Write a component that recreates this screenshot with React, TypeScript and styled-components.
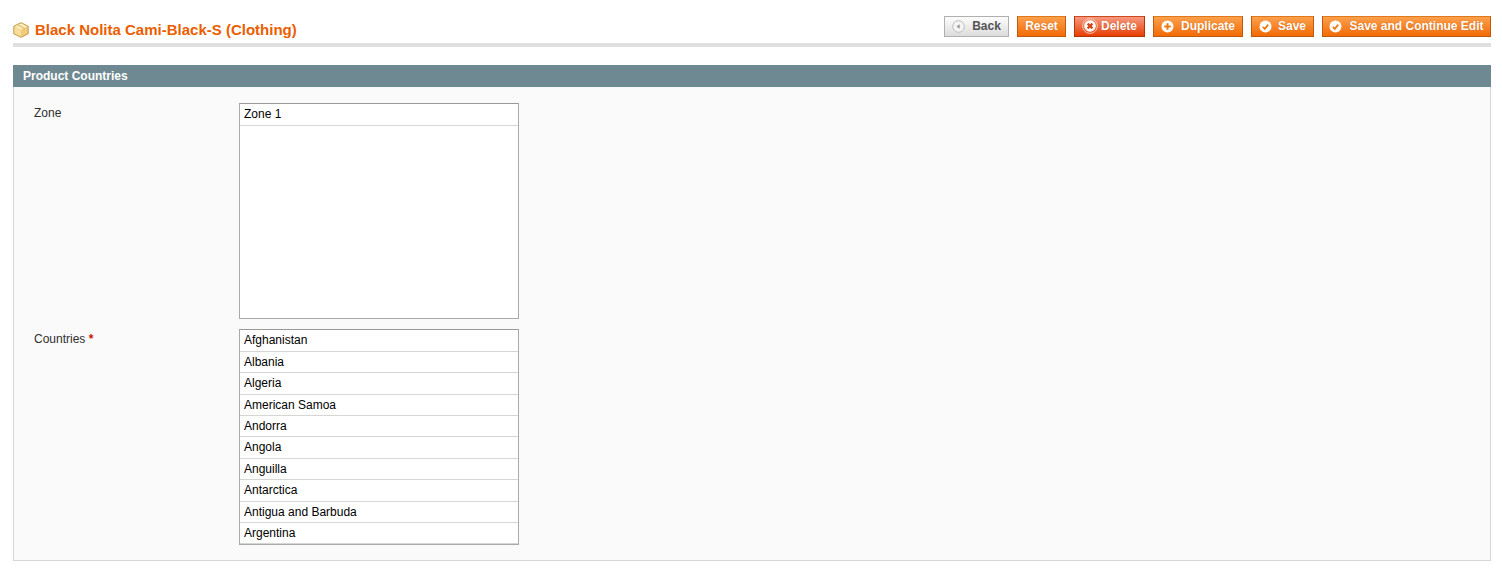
import React from "react";
import styled, { createGlobalStyle } from "styled-components";

type Tone = "plain" | "orange" | "red";
type Glyph = "back" | "delete" | "add" | "save";

const GlobalStyle = createGlobalStyle`
  html, body {
    margin: 0;
    padding: 0;
    background: #fff;
  }
  body {
    font-family: "Liberation Sans", Arial, sans-serif;
    font-size: 12px;
    color: #2f2f2f;
  }
`;

const countries = [
  "Afghanistan",
  "Albania",
  "Algeria",
  "American Samoa",
  "Andorra",
  "Angola",
  "Anguilla",
  "Antarctica",
  "Antigua and Barbuda",
  "Argentina",
];

const BoxIcon = () => (
  <svg width="16" height="16" viewBox="0 0 16 16">
    <path d="M8 .7 15.2 4.2v7.6L8 15.3.8 11.8V4.2z" fill="#efcb7c" stroke="#c29a4e" strokeWidth="1" />
    <path d="M8 1.4 14.4 4.5 8 7.6 1.6 4.5z" fill="#fbeec4" />
    <path d="M8 7.8v6.6L1.6 11.4V5z" fill="#f7dc9a" />
    <path d="M4.6 2.9 11.2 6.1v2.6" fill="none" stroke="#e8c272" strokeWidth="1.2" />
  </svg>
);

const ButtonIcon = ({ glyph }: { glyph: Glyph }) => {
  if (glyph === "back") {
    return (
      <svg width="13" height="13" viewBox="0 0 13 13">
        <circle cx="6.5" cy="6.5" r="5.8" fill="#f4f4f4" stroke="#bdbdbd" />
        <path d="M7.6 4.2v4.6L4.7 6.5z" fill="#8f8f8f" />
      </svg>
    );
  }
  if (glyph === "delete") {
    return (
      <svg width="16" height="16" viewBox="0 0 16 16">
        <circle cx="8" cy="8" r="7.4" fill="none" stroke="#f9c6b2" strokeWidth="1" />
        <circle cx="8" cy="8" r="5.8" fill="#fff" />
        <path d="M5.6 5.6l4.8 4.8M10.4 5.6l-4.8 4.8" stroke="#d9431a" strokeWidth="2.2" />
      </svg>
    );
  }
  if (glyph === "add") {
    return (
      <svg width="13" height="13" viewBox="0 0 13 13">
        <circle cx="6.5" cy="6.5" r="6" fill="#fff" />
        <path d="M6.5 3.2v6.6M3.2 6.5h6.6" stroke="#f07a12" strokeWidth="2" />
      </svg>
    );
  }
  return (
    <svg width="13" height="13" viewBox="0 0 13 13">
      <circle cx="6.5" cy="6.5" r="6" fill="#fff" />
      <path d="M3.8 6.8l2 2 3.4-4.2" fill="none" stroke="#f07a12" strokeWidth="1.8" />
    </svg>
  );
};

export default function App() {
  return (
    <Page>
      <GlobalStyle />
      <ContentHeader>
        <Heading>
          <BoxIcon />
          <span>Black Nolita Cami-Black-S (Clothing)</span>
        </Heading>
        <Actions>
          <ActionButton tone="plain" $width={65}>
            <ButtonIcon glyph="back" />
            <ButtonLabel $gap={7}>Back</ButtonLabel>
          </ActionButton>
          <ActionButton tone="orange" $width={49}>
            <ButtonLabel $gap={0}>Reset</ButtonLabel>
          </ActionButton>
          <ActionButton tone="red" $width={71}>
            <ButtonIcon glyph="delete" />
            <ButtonLabel $gap={3}>Delete</ButtonLabel>
          </ActionButton>
          <ActionButton tone="orange" $width={90}>
            <ButtonIcon glyph="add" />
            <ButtonLabel $gap={7}>Duplicate</ButtonLabel>
          </ActionButton>
          <ActionButton tone="orange" $width={63}>
            <ButtonIcon glyph="save" />
            <ButtonLabel $gap={6}>Save</ButtonLabel>
          </ActionButton>
          <ActionButton tone="orange" $width={169}>
            <ButtonIcon glyph="save" />
            <ButtonLabel $gap={7}>Save and Continue Edit</ButtonLabel>
          </ActionButton>
        </Actions>
      </ContentHeader>

      <PanelHead>Product Countries</PanelHead>
      <Fieldset>
        <FormRow>
          <FieldLabel>Zone</FieldLabel>
          <ListBox>
            <ListItem>Zone 1</ListItem>
          </ListBox>
        </FormRow>
        <FormRow>
          <FieldLabel>
            Countries <Required>*</Required>
          </FieldLabel>
          <ListBox>
            {countries.map((name) => (
              <ListItem key={name}>{name}</ListItem>
            ))}
          </ListBox>
        </FormRow>
      </Fieldset>
    </Page>
  );
}

const Page = styled.div`
  width: 1478px;
  padding: 16px 11px 14px 13px;
`;

const ContentHeader = styled.div`
  display: flex;
  align-items: flex-start;
  justify-content: space-between;
  height: 27px;
  border-bottom: 4px solid #dfdfdf;
  margin-bottom: 18px;
`;

const Heading = styled.h3`
  display: flex;
  align-items: center;
  gap: 6px;
  margin: 5px 0 0;
  height: 18px;
  font-size: 15px;
  line-height: 18px;
  font-weight: bold;
  color: #eb5e00;
`;

const Actions = styled.div`
  display: flex;
  gap: 8px;
`;

const toneStyles: Record<Tone, string> = {
  plain: `
    border: 1px solid #b0b0b0;
    background: linear-gradient(#fdfdfd, #dcdcdc);
    color: #555;
    text-shadow: none;
  `,
  orange: `
    border: 1px solid #bf5a0c;
    border-top-color: #e0781c;
    background: linear-gradient(#fda04c, #f26a06);
    color: #fff;
    text-shadow: 0 0 1px rgba(160, 70, 0, .6);
  `,
  red: `
    border: 1px solid #b23508;
    border-top-color: #d04a20;
    background: linear-gradient(#f79a80, #e83f05);
    color: #fff;
    text-shadow: 0 0 1px rgba(150, 40, 0, .6);
  `,
};

const ActionButton = styled.button.attrs({ type: "button" })<{ tone: Tone; $width: number }>`
  display: flex;
  align-items: center;
  justify-content: center;
  box-sizing: border-box;
  width: ${(props) => props.$width}px;
  height: 21px;
  padding: 0 0 1px;
  font-family: inherit;
  font-size: 12px;
  font-weight: bold;
  white-space: nowrap;
  cursor: pointer;
  ${(props) => toneStyles[props.tone]}
`;

const ButtonLabel = styled.span<{ $gap: number }>`
  margin-left: ${(props) => props.$gap}px;
`;

const PanelHead = styled.div`
  height: 22px;
  padding-left: 10px;
  background: #6f8992;
  color: #fff;
  font-size: 12px;
  font-weight: bold;
  line-height: 22px;
`;

const Fieldset = styled.div`
  display: flex;
  flex-direction: column;
  gap: 10px;
  height: 474px;
  box-sizing: border-box;
  padding: 16px 20px 0;
  background: #fafafa;
  border: 1px solid #d6d6d6;
  border-top: 0;
`;

const FormRow = styled.div`
  display: grid;
  grid-template-columns: 205px 280px;
`;

const FieldLabel = styled.label`
  padding-top: 3px;
  font-size: 12px;
  line-height: 14px;
  color: #2f2f2f;
`;

const Required = styled.span`
  color: #c9140a;
  font-weight: bold;
`;

const ListBox = styled.div`
  box-sizing: border-box;
  height: 216px;
  overflow: hidden;
  background: #fff;
  border: 1px solid #aaa;
  border-top-color: #999;
`;

const ListItem = styled.div`
  box-sizing: border-box;
  height: 21.4px;
  padding-left: 4px;
  border-bottom: 1px solid #d6d6d6;
  font-size: 12px;
  line-height: 20px;
  color: #000;

  &:first-child {
    height: 21.8px;
  }
`;
